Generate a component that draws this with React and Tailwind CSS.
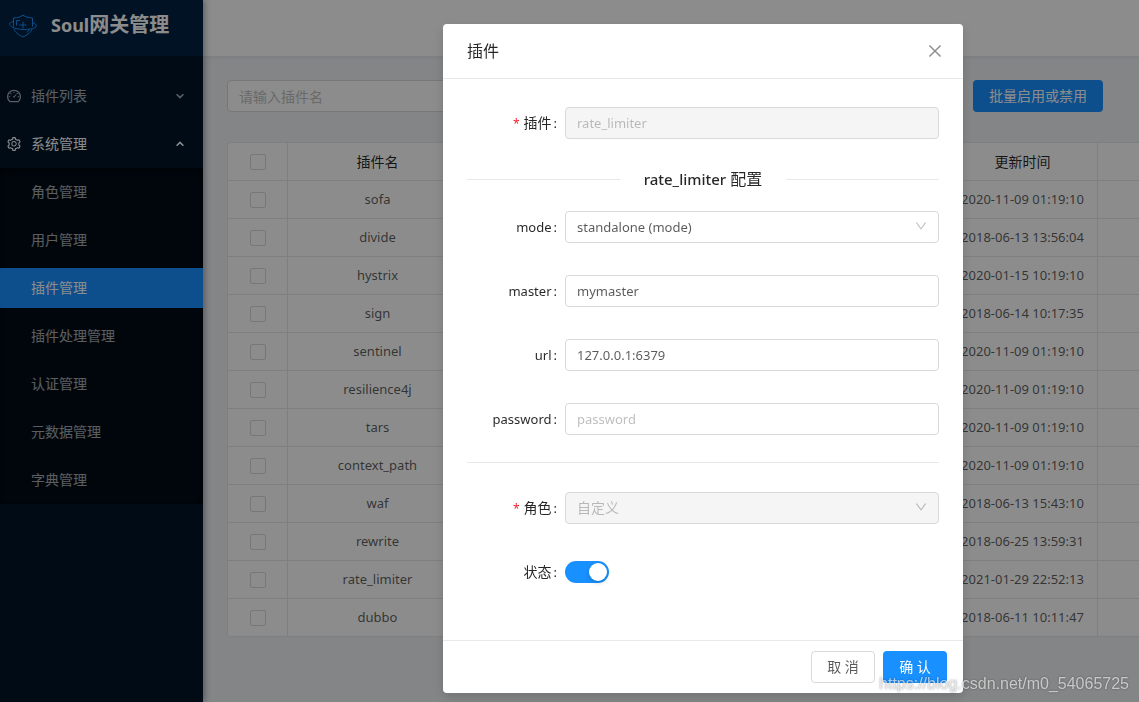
import { AiOutlineClose, AiOutlineDashboard, AiOutlineDown, AiOutlineSetting } from "react-icons/ai";

const subMenu = ["角色管理", "用户管理", "插件管理", "插件处理管理", "认证管理", "元数据管理", "字典管理"];

const rows = [
  ["sofa", "2020-11-09 01:19:10"],
  ["divide", "2018-06-13 13:56:04"],
  ["hystrix", "2020-01-15 10:19:10"],
  ["sign", "2018-06-14 10:17:35"],
  ["sentinel", "2020-11-09 01:19:10"],
  ["resilience4j", "2020-11-09 01:19:10"],
  ["tars", "2020-11-09 01:19:10"],
  ["context_path", "2020-11-09 01:19:10"],
  ["waf", "2018-06-13 15:43:10"],
  ["rewrite", "2018-06-25 13:59:31"],
  ["rate_limiter", "2021-01-29 22:52:13"],
  ["dubbo", "2018-06-11 10:11:47"],
];

function Logo() {
  return (
    <svg className="h-7 w-7 shrink-0" viewBox="0 0 28 28" fill="none" stroke="#1890ff" strokeWidth="1" aria-hidden="true">
      <path d="M4.500 15.500V7C8.500 6.800 11.500 6 14 4.200c2.500 1.800 5.500 2.600 9.500 2.800v8.500" />
      <path d="M5 18c1 3.400 4.200 5.600 9 8 4.600-2.200 7.800-4.400 9-7.500" />
      <path d="M4.500 10.500C1.600 11 .2 12.200.8 13.700c1 2.800 7.700 4.800 14.400 4.800 6.500 0 11.900-1.300 12.200-3.500.1-1.400-1.500-2.600-3.900-3.500" />
      <path d="M7.500 14.500V9.500h3.500M14 10.500v7M10.500 14h7" />
      <path d="M20.500 18.300 18 21.500" />
    </svg>
  );
}

function Caret({ up = false }) {
  return (
    <svg className="h-2 w-2" viewBox="0 0 8 8" fill="none" stroke="currentColor" strokeWidth="1.6" aria-hidden="true">
      <path d={up ? "M0.600 5.800 4 2.400l3.400 3.400" : "M0.600 2.200 4 5.600l3.400-3.400"} />
    </svg>
  );
}

function Sidebar() {
  return (
    <aside className="relative z-10 w-[203px] shrink-0 bg-[#001529] shadow-[2px_0_6px_rgba(0,21,41,0.35)]">
      <div className="flex h-14 items-center gap-3.5 bg-[#002140] pl-[9px] pb-1.5">
        <Logo />
        <h1 className="text-xl font-bold text-white">
          <span className="text-lg">Soul</span>网关管理
        </h1>
      </div>
      <nav className="pt-4 text-white/65">
        <button type="button" className="my-1 flex h-10 w-full items-center gap-[9px] pr-[19px] pl-1.5">
          <AiOutlineDashboard className="text-base" />
          <span className="flex-1 text-left">插件列表</span>
          <Caret />
        </button>
        <button type="button" className="mt-2 flex h-10 w-full items-center gap-[9px] pr-[19px] pl-1.5 text-white" aria-expanded="true">
          <AiOutlineSetting className="text-base" />
          <span className="flex-1 text-left">系统管理</span>
          <Caret up />
        </button>
        <ul className="mt-1 flex flex-col gap-2 bg-[#000c17] py-1 shadow-[inset_0_2px_8px_rgba(0,0,0,0.45)]">
          {subMenu.map((name) => (
            <li key={name}>
              <a
                href="#"
                className={
                  name === "插件管理"
                    ? "flex h-10 items-center bg-[#1890ff] pl-[31px] text-white"
                    : "flex h-10 items-center pl-[31px]"
                }
              >
                {name}
              </a>
            </li>
          ))}
        </ul>
      </nav>
    </aside>
  );
}

function Tick({ label }) {
  return (
    <input
      type="checkbox"
      aria-label={label}
      className="mx-auto block h-4 w-4 appearance-none rounded-xs border border-[#d9d9d9] bg-white"
    />
  );
}

function PluginTable() {
  const cell = "h-[38px] border-r border-b border-[#e8e8e8] p-0 text-center";
  return (
    <table className="w-[1155px] table-fixed border-separate border-spacing-0 overflow-hidden rounded border-t border-l border-[#e8e8e8] bg-white">
      <colgroup>
        <col className="w-[60px]" />
        <col className="w-[180px]" />
        <col className="w-[480px]" />
        <col className="w-[150px]" />
        <col />
      </colgroup>
      <thead className="text-black/85">
        <tr>
          <th className={cell}><Tick label="全选" /></th>
          <th className={`${cell} font-normal`}>插件名</th>
          <th className={cell} />
          <th className={`${cell} font-normal`}>更新时间</th>
          <th className={cell} />
        </tr>
      </thead>
      <tbody className="text-[13px]">
        {rows.map(([name, time]) => (
          <tr key={name}>
            <td className={cell}><Tick label={name} /></td>
            <td className={cell}>{name}</td>
            <td className={cell} />
            <td className={`${cell} whitespace-nowrap`}>{time}</td>
            <td className={cell} />
          </tr>
        ))}
      </tbody>
    </table>
  );
}

function Field({ id, label, required = false, latin = false, children }) {
  return (
    <div className="flex items-center">
      <label htmlFor={id} className="w-[98px] shrink-0 pr-2 text-right text-black/85">
        {required && <span className="mr-1 text-xs text-[#f5222d]">*</span>}
        <span className={latin ? "text-[13px]" : "text-sm"}>{label}</span>
        <span className="ml-0.5 text-[13px]">:</span>
      </label>
      <div className="relative flex-1">{children}</div>
    </div>
  );
}

const control =
  "block h-8 w-full appearance-none rounded border border-[#d9d9d9] bg-white px-[11px] text-black/65 placeholder:text-[#bfbfbf] disabled:bg-[#f5f5f5] disabled:text-black/25 disabled:opacity-100";
const latinControl = `${control} text-[13px]`;

function Select({ id, value, className, disabled = false }) {
  return (
    <>
      <select id={id} disabled={disabled} className={className}>
        <option>{value}</option>
      </select>
      <AiOutlineDown className="pointer-events-none absolute top-2 right-[11px] text-sm text-black/25" />
    </>
  );
}

function PluginDialog() {
  return (
    <div className="fixed inset-0 z-20 flex items-start justify-center bg-black/45 pt-6 pl-[267px]">
      <form
        role="dialog"
        aria-labelledby="dialog-title"
        className="w-[520px] shrink-0 rounded bg-white shadow-[0_4px_12px_rgba(0,0,0,0.15)]"
      >
        <header className="flex h-[55px] items-center justify-between border-b border-[#e8e8e8] pr-[19px] pl-6">
          <h2 id="dialog-title" className="text-base text-black/85">插件</h2>
          <button type="button" aria-label="关闭" className="text-lg text-black/45">
            <AiOutlineClose />
          </button>
        </header>
        <div className="px-6 pt-7 pb-13">
          <Field id="plugin" label="插件" required>
            <input id="plugin" disabled defaultValue="rate_limiter" className={latinControl} />
          </Field>
          <div className="mt-7 mb-5 flex items-center gap-6">
            <span className="h-px flex-1 bg-[#e8e8e8]" />
            <h3 className="text-base/6 text-black/85">
              <span className="text-[15px] font-medium">rate_limiter</span> 配置
            </h3>
            <span className="h-px flex-1 bg-[#e8e8e8]" />
          </div>
          <div className="flex flex-col gap-8">
            <Field id="mode" label="mode" latin>
              <Select id="mode" value="standalone (mode)" className={latinControl} />
            </Field>
            <Field id="master" label="master" latin>
              <input id="master" defaultValue="mymaster" className={latinControl} />
            </Field>
            <Field id="url" label="url" latin>
              <input id="url" defaultValue="127.0.0.1:6379" className={latinControl} />
            </Field>
            <Field id="password" label="password" latin>
              <input id="password" placeholder="password" className={latinControl} />
            </Field>
          </div>
          <hr className="mt-[27px] mb-[29px] border-[#e8e8e8]" />
          <div className="flex flex-col gap-8">
            <Field id="role" label="角色" required>
              <Select id="role" value="自定义" className={control} disabled />
            </Field>
            <Field id="status" label="状态">
              <div className="flex h-8 items-center">
                <input
                  id="status"
                  type="checkbox"
                  role="switch"
                  defaultChecked
                  className="flex h-[22px] w-11 appearance-none items-center rounded-full bg-black/25 px-0.5 before:h-[18px] before:w-[18px] before:rounded-full before:bg-white before:shadow-[0_2px_4px_rgba(0,35,11,0.2)] before:content-[''] checked:justify-end checked:bg-[#1890ff]"
                />
              </div>
            </Field>
          </div>
        </div>
        <footer className="flex justify-end gap-2 border-t border-[#e8e8e8] px-4 py-2.5">
          <button type="button" className="h-8 w-16 rounded border border-[#d9d9d9] bg-white">取 消</button>
          <button type="submit" className="h-8 w-16 rounded bg-[#1890ff] text-white">确 认</button>
        </footer>
      </form>
    </div>
  );
}

export default function App() {
  return (
    <div className="flex min-h-screen overflow-hidden bg-[#f0f2f5] font-['Noto_Sans','Noto_Sans_CJK_SC',sans-serif] text-sm text-black/65">
      <Sidebar />
      <div className="min-w-0 flex-1 overflow-hidden">
        <header className="h-14 bg-white shadow-[0_1px_4px_rgba(0,21,41,0.08)]" />
        <main className="p-6">
          <div className="mb-[30px] flex justify-between pr-3">
            <input
              aria-label="插件名"
              placeholder="请输入插件名"
              className="h-8 w-60 rounded border border-[#d9d9d9] bg-white px-[11px] placeholder:text-[#bfbfbf]"
            />
            <button type="button" className="h-8 rounded bg-[#1890ff] px-4 text-white">批量启用或禁用</button>
          </div>
          <PluginTable />
        </main>
      </div>
      <PluginDialog />
      <p className="pointer-events-none fixed right-2.5 bottom-1.5 z-30 font-['Liberation_Sans',sans-serif] text-base/6 text-white/65 [text-shadow:0_0_2px_rgba(0,0,0,0.45)]">
        https://blog.csdn.net/m0_54065725
      </p>
    </div>
  );
}
